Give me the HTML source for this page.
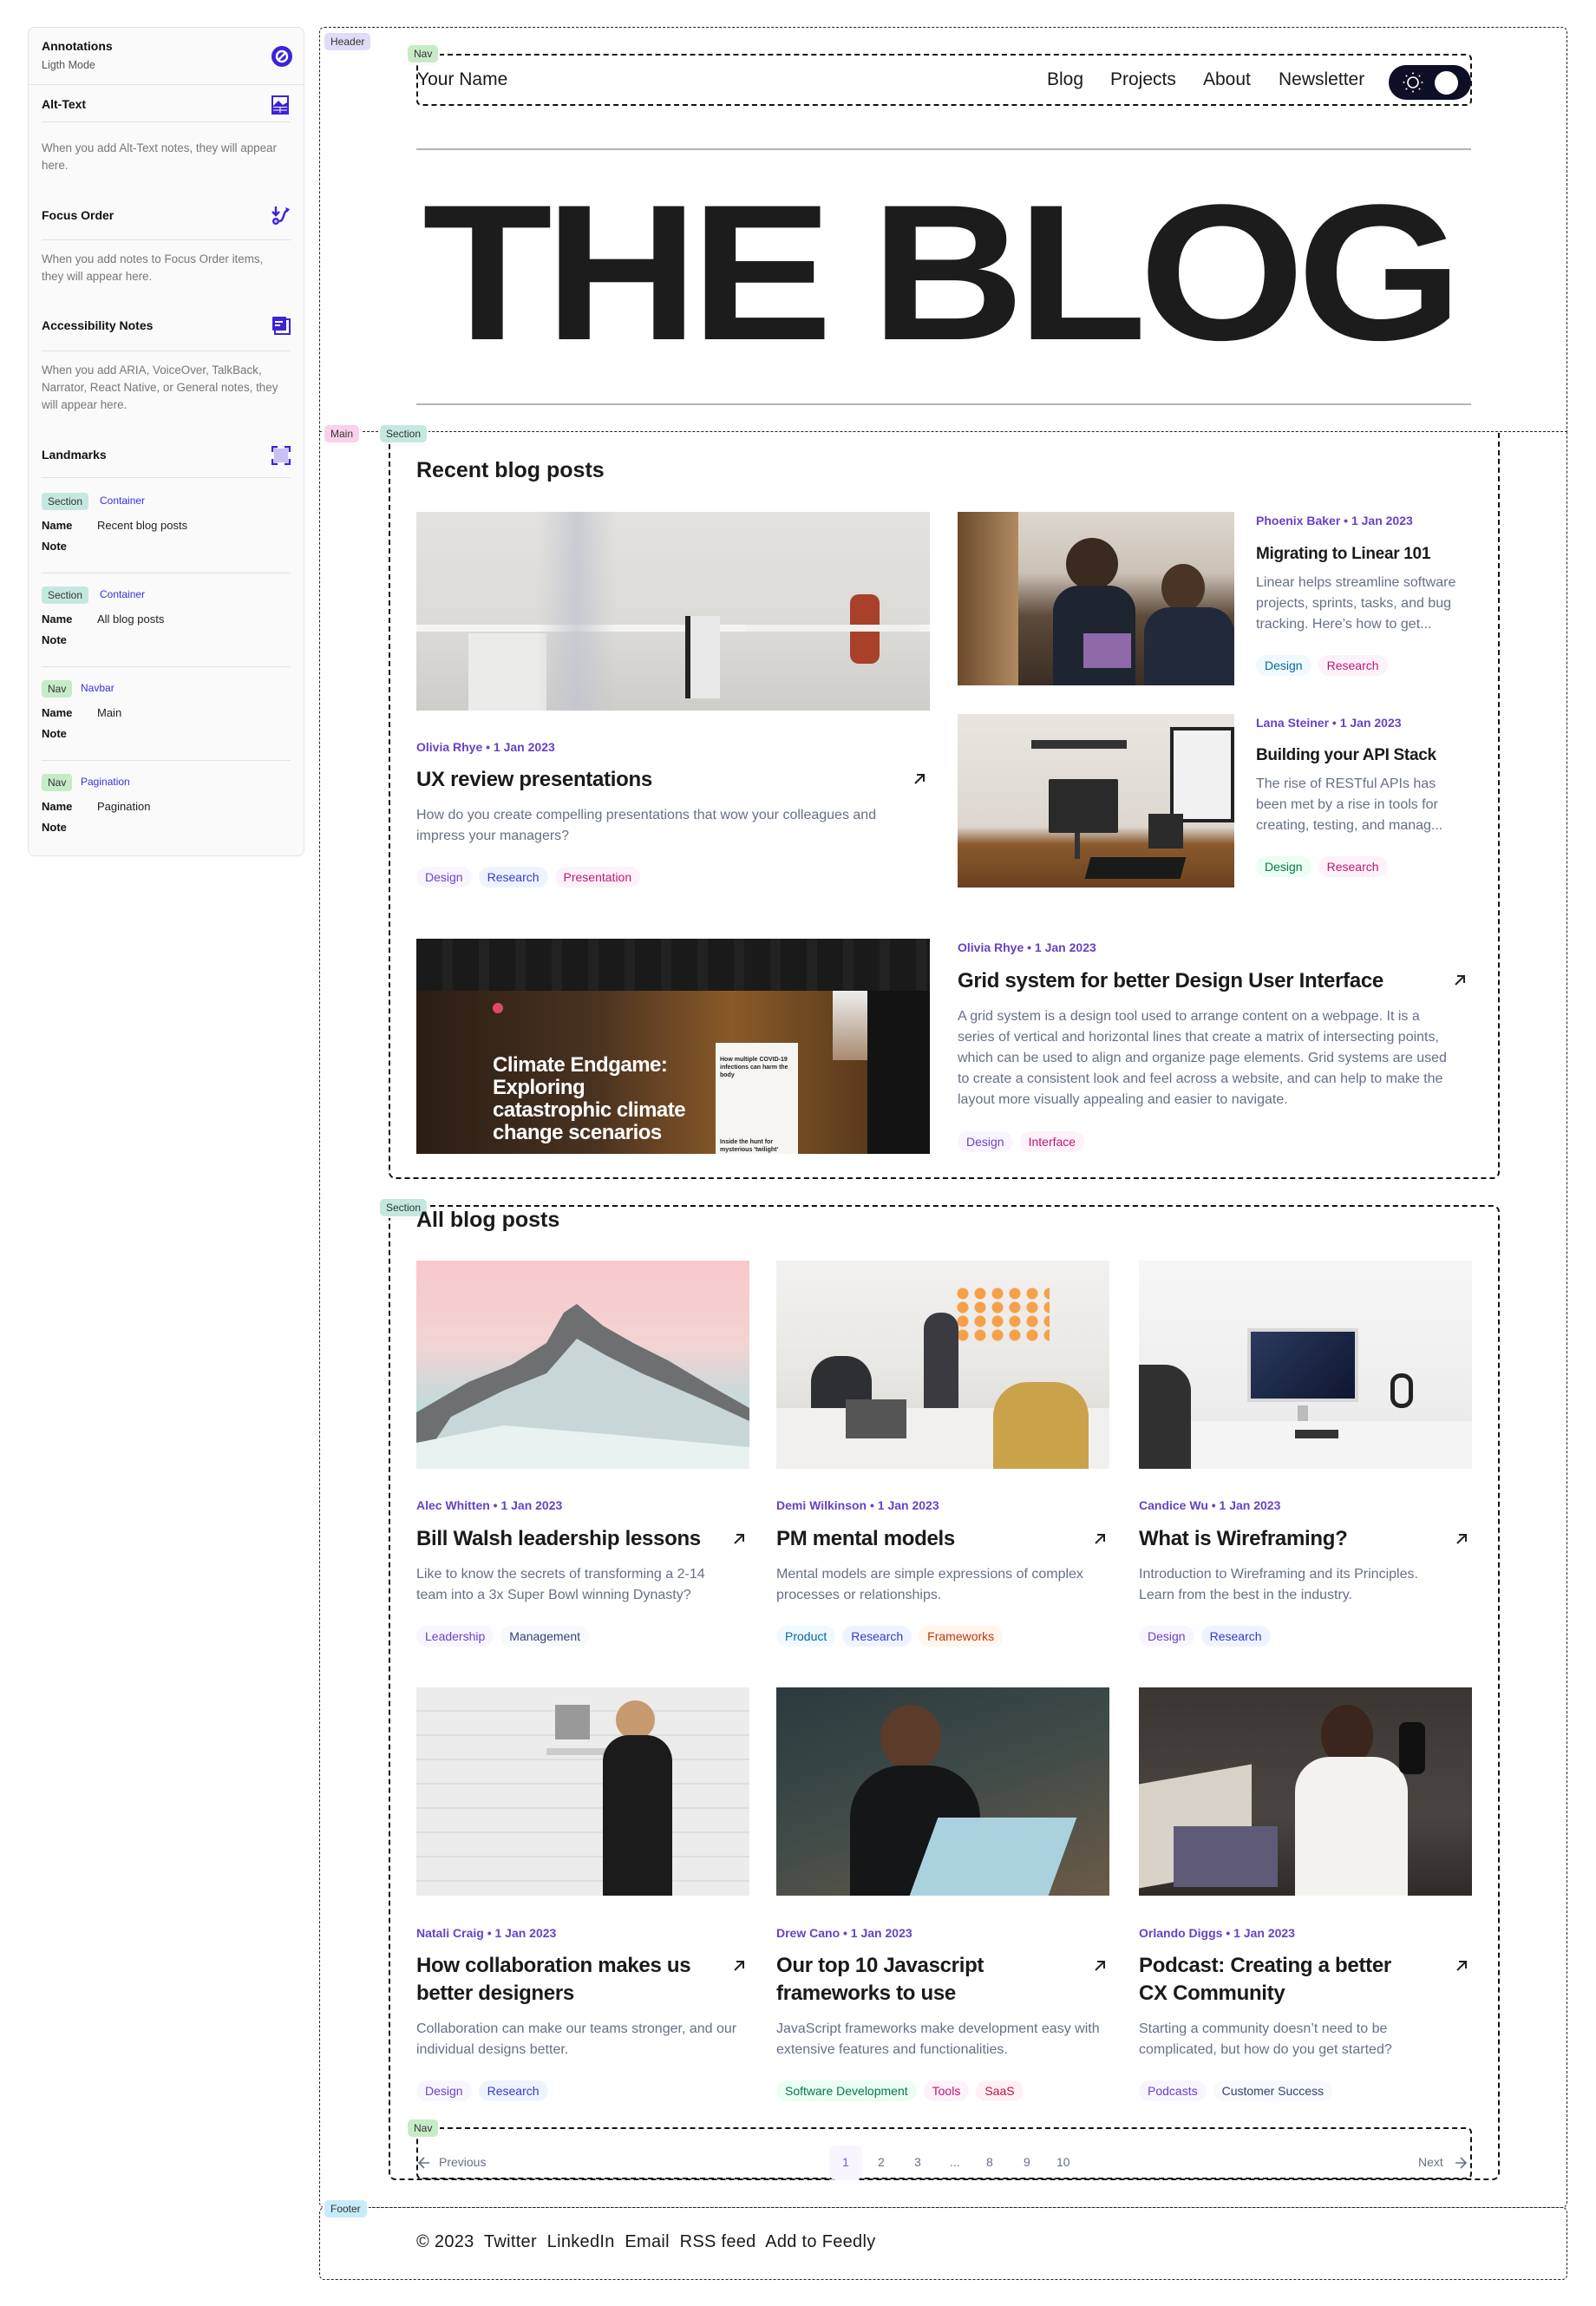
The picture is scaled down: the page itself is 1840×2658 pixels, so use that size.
<!DOCTYPE html>
<html><head><meta charset="utf-8">
<style>
*{margin:0;padding:0;box-sizing:border-box}
body{width:1840px;height:2658px;background:#fff;font-family:"Liberation Sans",Arial,sans-serif;position:relative;overflow:hidden;color:#1a1a1a}
.a{position:absolute}
.lbl{position:absolute;font-size:12px;color:#333;padding:3px 7px;border-radius:5px;line-height:14px;box-shadow:0 0 0 2px #fff,0 1px 3px rgba(0,0,0,.15)}
.side{position:absolute;left:32px;top:31px;width:319px;height:956px;background:#fafafa;border:1px solid #e4e4e4;border-radius:8px}
.sh{position:absolute;left:15px;font-size:14px;font-weight:bold;color:#111}
.st{position:absolute;left:15px;width:288px;font-size:13.4px;line-height:20px;color:#777}
.dv{position:absolute;left:15px;width:287px;height:1px;background:#e2e2e2}
.ic{position:absolute;left:280px}
.tg{position:absolute;left:15px;font-size:12px;padding:3px 7px;border-radius:4px;color:#333;line-height:14px}
.tl{position:absolute;font-size:12px;color:#3b2ee0}
.nm{position:absolute;left:15px;font-size:13px;font-weight:bold;color:#111}
.nv{position:absolute;left:79px;font-size:13px;color:#222}
.meta{position:absolute;font-size:14px;font-weight:bold;color:#6941c6;line-height:20px}
.ttl{position:absolute;font-size:24px;font-weight:bold;color:#1a1a1a;line-height:32px;letter-spacing:-0.3px}
.ds{position:absolute;font-size:16px;color:#667085;line-height:24px}
.tags{position:absolute;display:flex;gap:8px}
.t{font-size:14px;line-height:24px;height:24px;padding:0 10px;border-radius:12px;font-weight:500}
.pu{color:#6941c6;background:#f9f5ff}.in{color:#3538cd;background:#eef4ff}.pk{color:#c11574;background:#fdf2fa}
.gr{color:#363f72;background:#f8f9fc}.bl{color:#026aa2;background:#f0f9ff}.or{color:#c4320a;background:#fff6ed}
.gn{color:#027a48;background:#ecfdf3}.rs{color:#c01048;background:#fff1f3}
.arr{position:absolute;width:16px;height:16px}
.img{position:absolute;overflow:hidden}
</style></head><body>

<!-- Sidebar -->
<div class="side">
  <div class="sh" style="top:13px">Annotations</div>
  <div class="a" style="left:15px;top:36px;font-size:12.5px;color:#555">Ligth Mode</div>
  <svg class="ic" style="top:21px" width="24" height="24" viewBox="0 0 24 24"><circle cx="12" cy="12" r="12" fill="#3b24d6"/><circle cx="12" cy="12" r="6" fill="none" stroke="#fff" stroke-width="2.4"/><line x1="7" y1="17" x2="17" y2="7" stroke="#fff" stroke-width="2.4"/></svg>
  <div class="a" style="left:0;top:65px;width:317px;height:1px;background:#e6e6e6"></div>
  <div class="sh" style="top:80px">Alt-Text</div>
  <svg class="ic" style="top:78px" width="20" height="22" viewBox="0 0 20 22"><rect x="1" y="1" width="18" height="20" fill="none" stroke="#3b24d6" stroke-width="2"/><path d="M2 12 L8 6 L13 11 L18 8 V13 H2Z" fill="#3b24d6"/><rect x="2" y="14" width="16" height="6" fill="#3b24d6"/><line x1="2" y1="17" x2="18" y2="17" stroke="#fff"/><line x1="10" y1="14" x2="10" y2="20" stroke="#fff"/></svg>
  <div class="dv" style="top:108px"></div>
  <div class="st" style="top:129px">When you add Alt-Text notes, they will appear here.</div>
  <div class="sh" style="top:208px">Focus Order</div>
  <svg class="ic" style="top:204px" width="24" height="26" viewBox="0 0 24 26"><path d="M5 2 V12 M1 8 L5 12 L9 8" fill="none" stroke="#3b24d6" stroke-width="2.4"/><circle cx="5" cy="19" r="4" fill="#3b24d6"/><circle cx="5" cy="19" r="1.8" fill="#c9c1f5"/><path d="M9 19 C15 19 13 7 19 6" fill="none" stroke="#3b24d6" stroke-width="2.4"/><path d="M16 3 L21 5 L18 9Z" fill="#3b24d6"/></svg>
  <div class="dv" style="top:244px"></div>
  <div class="st" style="top:257px;width:270px">When you add notes to Focus Order items, they will appear here.</div>
  <div class="sh" style="top:335px">Accessibility Notes</div>
  <svg class="ic" style="top:332px" width="22" height="22" viewBox="0 0 22 22"><rect x="4" y="4" width="17" height="17" fill="none" stroke="#3b24d6" stroke-width="2"/><rect x="1" y="1" width="16" height="16" rx="1" fill="#3b24d6"/><rect x="4" y="6" width="9" height="2" fill="#fff"/><rect x="4" y="10" width="6" height="2" fill="#fff"/></svg>
  <div class="dv" style="top:372px"></div>
  <div class="st" style="top:385px">When you add ARIA, VoiceOver, TalkBack, Narrator, React Native, or General notes, they will appear here.</div>
  <div class="sh" style="top:484px">Landmarks</div>
  <svg class="ic" style="top:482px" width="22" height="22" viewBox="0 0 22 22"><rect x="3" y="3" width="16" height="16" fill="#c9c1f5"/><path d="M1 7V1H7 M15 1H21V7 M21 15V21H15 M7 21H1V15" fill="none" stroke="#3b24d6" stroke-width="2.4"/></svg>
  <div class="dv" style="top:518px"></div>

  <div class="tg" style="top:536px;background:#c4e8e0">Section</div><div class="tl" style="left:82px;top:538px">Container</div>
  <div class="nm" style="top:566px">Name</div><div class="nv" style="top:566px">Recent blog posts</div>
  <div class="nm" style="top:590px">Note</div>
  <div class="dv" style="top:628px"></div>
  <div class="tg" style="top:644px;background:#c4e8e0">Section</div><div class="tl" style="left:82px;top:646px">Container</div>
  <div class="nm" style="top:674px">Name</div><div class="nv" style="top:674px">All blog posts</div>
  <div class="nm" style="top:698px">Note</div>
  <div class="dv" style="top:736px"></div>
  <div class="tg" style="top:752px;background:#c8eac8">Nav</div><div class="tl" style="left:60px;top:754px">Navbar</div>
  <div class="nm" style="top:782px">Name</div><div class="nv" style="top:782px">Main</div>
  <div class="nm" style="top:806px">Note</div>
  <div class="dv" style="top:844px"></div>
  <div class="tg" style="top:860px;background:#c8eac8">Nav</div><div class="tl" style="left:60px;top:862px">Pagination</div>
  <div class="nm" style="top:890px">Name</div><div class="nv" style="top:890px">Pagination</div>
  <div class="nm" style="top:914px">Note</div>
</div>

<!-- Header -->
<div class="a" style="left:368px;top:31px;width:1439px;height:467px;border:1px dashed #222;border-bottom:none;border-radius:6px 6px 0 0"></div>
<div class="lbl" style="left:374px;top:38px;background:#e0dcf7">Header</div>
<div class="a" style="left:480px;top:62px;width:1217px;height:60px;border:2px dashed #111;border-radius:6px"></div>
<div class="lbl" style="left:470px;top:52px;background:#c8eac8">Nav</div>
<div class="a" style="left:481px;top:80px;font-size:21px;color:#1a1a1a">Your Name</div>
<div class="a" style="left:1207px;top:80px;font-size:21px;color:#1a1a1a">Blog</div>
<div class="a" style="left:1280px;top:80px;font-size:21px;color:#1a1a1a">Projects</div>
<div class="a" style="left:1387px;top:80px;font-size:21px;color:#1a1a1a">About</div>
<div class="a" style="left:1474px;top:80px;font-size:21px;color:#1a1a1a">Newsletter</div>
<div class="a" style="left:1601px;top:75px;width:95px;height:40px;border-radius:20px;background:#0d0f26"></div>
<div class="a" style="left:1654px;top:82px;width:27px;height:27px;border-radius:50%;background:#fff"></div>
<svg class="a" style="left:1616px;top:82px" width="26" height="26" viewBox="0 0 26 26"><circle cx="13" cy="13" r="6" fill="none" stroke="#fff" stroke-width="1.6"/><g fill="#fff"><circle cx="13" cy="2.5" r="1"/><circle cx="13" cy="23.5" r="1"/><circle cx="2.5" cy="13" r="1"/><circle cx="23.5" cy="13" r="1"/><circle cx="5.5" cy="5.5" r="1"/><circle cx="20.5" cy="20.5" r="1"/><circle cx="5.5" cy="20.5" r="1"/><circle cx="20.5" cy="5.5" r="1"/></g></svg>
<div class="a" style="left:480px;top:171px;width:1216px;height:2px;background:#b3b3b3"></div>
<div class="a" style="left:487px;top:203px;font-size:223px;line-height:223px;font-weight:bold;color:#1c1c1c;letter-spacing:-8px;word-spacing:-6px;white-space:nowrap;transform:scaleX(1.1);transform-origin:0 0">THE BLOG</div>
<div class="a" style="left:480px;top:465px;width:1216px;height:2px;background:#b3b3b3"></div>

<!-- Main -->
<div class="a" style="left:368px;top:497px;width:1439px;height:2048px;border:1px dashed #222;border-radius:0 0 6px 6px"></div>
<div class="lbl" style="left:374px;top:490px;background:#fbd0ea">Main</div>
<div class="a" style="left:448px;top:497px;width:1281px;height:862px;border:2px dashed #111;border-top:none;border-radius:0 0 8px 8px"></div>
<div class="lbl" style="left:438px;top:490px;background:#c4e8e0">Section</div>
<div class="a" style="left:480px;top:528px;font-size:25px;font-weight:bold;color:#1a1a1a">Recent blog posts</div>

<!-- Featured big -->
<div class="img" style="left:480px;top:590px;width:592px;height:229px;background:linear-gradient(180deg,#e4e2df 0%,#dcdad6 60%,#cfcdc9 100%)">
  <div class="a" style="left:0;top:130px;width:592px;height:8px;background:#f4f4f2"></div>
  <div class="a" style="left:60px;top:140px;width:90px;height:89px;background:#ebebea"></div>
  <div class="a" style="left:140px;top:0;width:90px;height:229px;background:linear-gradient(90deg,rgba(200,200,205,0),rgba(190,195,205,.7),rgba(200,200,205,0))"></div>
  <div class="a" style="left:310px;top:120px;width:40px;height:95px;background:#e8e8e8;border-left:6px solid #222"></div>
  <div class="a" style="left:500px;top:95px;width:34px;height:80px;background:#a9412a;border-radius:10px"></div>
  <div class="a" style="left:380px;top:130px;width:200px;height:8px;background:#f0f0ee"></div>
</div>
<div class="meta" style="left:480px;top:851px">Olivia Rhye • 1 Jan 2023</div>
<div class="ttl" style="left:480px;top:883px">UX review presentations</div>
<svg class="arr" style="left:1052px;top:890px" viewBox="0 0 16 16"><path d="M3 13 L13 3 M5 3 H13 V11" fill="none" stroke="#222" stroke-width="2"/></svg>
<div class="ds" style="left:480px;top:928px;width:590px">How do you create compelling presentations that wow your colleagues and impress your managers?</div>
<div class="tags" style="left:480px;top:999px"><span class="t pu">Design</span><span class="t in">Research</span><span class="t pk">Presentation</span></div>

<!-- Right 1 -->
<div class="img" style="left:1104px;top:590px;width:319px;height:200px;background:linear-gradient(180deg,#ddd7cf 0%,#cbc2b5 35%,#5d4a3a 60%,#3a2e24 100%)">
  <div class="a" style="left:0;top:0;width:70px;height:200px;background:linear-gradient(90deg,#6b4a2c,#b08a60)"></div>
  <div class="a" style="left:125px;top:30px;width:60px;height:60px;border-radius:50%;background:#3a2a20"></div>
  <div class="a" style="left:110px;top:85px;width:95px;height:115px;border-radius:30px 30px 0 0;background:#1e2430"></div>
  <div class="a" style="left:235px;top:60px;width:50px;height:55px;border-radius:50%;background:#4a3426"></div>
  <div class="a" style="left:215px;top:110px;width:104px;height:90px;border-radius:30px 30px 0 0;background:#22293a"></div>
  <div class="a" style="left:145px;top:140px;width:55px;height:40px;background:#8e6aa8"></div>
</div>
<div class="meta" style="left:1448px;top:590px">Phoenix Baker • 1 Jan 2023</div>
<div class="ttl" style="left:1448px;top:623px;font-size:19px">Migrating to Linear 101</div>
<div class="ds" style="left:1448px;top:660px;width:252px;font-size:16px">Linear helps streamline software projects, sprints, tasks, and bug tracking. Here’s how to get...</div>
<div class="tags" style="left:1448px;top:755px"><span class="t bl">Design</span><span class="t pk">Research</span></div>

<!-- Right 2 -->
<div class="img" style="left:1104px;top:823px;width:319px;height:200px;background:linear-gradient(180deg,#e9e5e0 0%,#ddd7d0 65%,#8a5a2e 75%,#6b4220 100%)">
  <div class="a" style="left:85px;top:30px;width:110px;height:10px;background:#333"></div>
  <div class="a" style="left:245px;top:15px;width:74px;height:110px;border:4px solid #222;background:#f1f1f1"></div>
  <div class="a" style="left:105px;top:75px;width:80px;height:62px;background:#2a2a2a;border-radius:2px"></div>
  <div class="a" style="left:135px;top:137px;width:6px;height:30px;background:#333"></div>
  <div class="a" style="left:150px;top:165px;width:110px;height:25px;background:#1a1a1a;transform:skewX(-15deg)"></div>
  <div class="a" style="left:220px;top:115px;width:40px;height:40px;background:#2b2b2b"></div>
</div>
<div class="meta" style="left:1448px;top:823px">Lana Steiner • 1 Jan 2023</div>
<div class="ttl" style="left:1448px;top:855px;font-size:19px">Building your API Stack</div>
<div class="ds" style="left:1448px;top:892px;width:225px;font-size:16px">The rise of RESTful APIs has been met by a rise in tools for creating, testing, and manag...</div>
<div class="tags" style="left:1448px;top:987px"><span class="t gn">Design</span><span class="t pk">Research</span></div>

<!-- Climate -->
<div class="img" style="left:480px;top:1082px;width:592px;height:248px;background:#141313">
  <div class="a" style="left:0;top:0;width:592px;height:60px;background:repeating-linear-gradient(90deg,#1a1a1a 0 30px,#222 30px 42px)"></div>
  <div class="a" style="left:0;top:60px;width:520px;height:188px;background:linear-gradient(90deg,#2a1d14 0%,#4a3220 40%,#8a5a28 70%,#5a3a1c 100%)"></div>
  <div class="a" style="left:88px;top:74px;width:12px;height:12px;border-radius:50%;background:#e04a6a"></div>
  <div class="a" style="left:88px;top:133px;font-size:24px;line-height:26px;font-weight:bold;color:#fff;letter-spacing:-0.5px;width:240px">Climate Endgame: Exploring catastrophic climate change scenarios</div>
  <div class="a" style="left:345px;top:120px;width:95px;height:128px;background:#f7f5f2"></div>
  <div class="a" style="left:350px;top:135px;font-size:7px;line-height:9px;font-weight:bold;color:#222;width:80px">How multiple COVID-19 infections can harm the body</div>
  <div class="a" style="left:350px;top:230px;font-size:7px;line-height:9px;font-weight:bold;color:#222;width:80px">Inside the hunt for mysterious 'twilight'</div>
  <div class="a" style="left:480px;top:60px;width:40px;height:80px;background:linear-gradient(180deg,#eee,#a88a70)"></div>
</div>
<div class="meta" style="left:1104px;top:1082px">Olivia Rhye • 1 Jan 2023</div>
<div class="ttl" style="left:1104px;top:1115px">Grid system for better Design User Interface</div>
<svg class="arr" style="left:1675px;top:1122px" viewBox="0 0 16 16"><path d="M3 13 L13 3 M5 3 H13 V11" fill="none" stroke="#222" stroke-width="2"/></svg>
<div class="ds" style="left:1104px;top:1160px;width:565px;font-size:16px">A grid system is a design tool used to arrange content on a webpage. It is a series of vertical and horizontal lines that create a matrix of intersecting points, which can be used to align and organize page elements. Grid systems are used to create a consistent look and feel across a website, and can help to make the layout more visually appealing and easier to navigate.</div>
<div class="tags" style="left:1104px;top:1304px"><span class="t pu">Design</span><span class="t pk">Interface</span></div>

<!-- Section 2 -->
<div class="a" style="left:448px;top:1389px;width:1281px;height:1124px;border:2px dashed #111;border-radius:8px"></div>
<div class="lbl" style="left:438px;top:1382px;background:#c4e8e0">Section</div>
<div class="a" style="left:480px;top:1392px;font-size:25px;font-weight:bold;color:#1a1a1a">All blog posts</div>

<!-- Row 1 images -->
<div class="img" style="left:480px;top:1453px;width:384px;height:240px;background:linear-gradient(180deg,#f8c9cc 0%,#f3d3d3 40%,#b9dcdc 75%,#9fd0d4 100%)">
  <svg class="a" style="left:0;top:0" width="384" height="240" viewBox="0 0 384 240"><path d="M0 175 L60 140 L110 120 L150 95 L170 60 L185 50 L215 75 L250 95 L290 115 L340 145 L384 170 V240 H0Z" fill="#6e6f70"/><path d="M40 180 L100 150 L150 130 L185 90 L220 110 L260 130 L330 160 L384 185 V240 H0Z" fill="#c8d6d8"/><path d="M0 210 L100 190 L220 200 L384 215 V240 H0Z" fill="#e9f1f1"/></svg>
</div>
<div class="img" style="left:895px;top:1453px;width:384px;height:240px;background:linear-gradient(180deg,#f2f1ef 0%,#e9e8e5 50%,#d8d5d0 100%)">
  <div class="a" style="left:205px;top:30px;width:110px;height:65px;background:radial-gradient(circle,#f6a04a 0 6px,transparent 7px) 0 0/20px 16px"></div>
  <div class="a" style="left:40px;top:110px;width:70px;height:90px;border-radius:30px 30px 0 0;background:#2d2f33"></div>
  <div class="a" style="left:170px;top:60px;width:40px;height:120px;border-radius:18px 18px 0 0;background:#3a3a40"></div>
  <div class="a" style="left:0;top:170px;width:384px;height:70px;background:#f1f0ee"></div>
  <div class="a" style="left:250px;top:140px;width:110px;height:100px;border-radius:40px 40px 0 0;background:#c9a24a"></div>
  <div class="a" style="left:80px;top:160px;width:70px;height:45px;background:#555"></div>
</div>
<div class="img" style="left:1313px;top:1453px;width:384px;height:240px;background:linear-gradient(180deg,#f6f6f6 0%,#ededed 70%,#e2e2e2 100%)">
  <div class="a" style="left:125px;top:78px;width:128px;height:85px;background:linear-gradient(135deg,#2b3a5e,#0f1630);border:4px solid #d8d8d8"></div>
  <div class="a" style="left:183px;top:167px;width:12px;height:22px;background:#bbb"></div>
  <div class="a" style="left:0;top:185px;width:384px;height:55px;background:#f4f4f4"></div>
  <div class="a" style="left:290px;top:130px;width:26px;height:40px;border:5px solid #222;border-radius:12px"></div>
  <div class="a" style="left:0;top:120px;width:60px;height:120px;background:#303030;border-radius:0 30px 0 0"></div>
  <div class="a" style="left:180px;top:195px;width:50px;height:10px;background:#333"></div>
</div>
<div class="meta" style="left:480px;top:1725px">Alec Whitten • 1 Jan 2023</div>
<div class="meta" style="left:895px;top:1725px">Demi Wilkinson • 1 Jan 2023</div>
<div class="meta" style="left:1313px;top:1725px">Candice Wu • 1 Jan 2023</div>
<div class="ttl" style="left:480px;top:1758px">Bill Walsh leadership lessons</div>
<div class="ttl" style="left:895px;top:1758px">PM mental models</div>
<div class="ttl" style="left:1313px;top:1758px">What is Wireframing?</div>
<svg class="arr" style="left:844px;top:1766px" viewBox="0 0 16 16"><path d="M3 13 L13 3 M5 3 H13 V11" fill="none" stroke="#222" stroke-width="2"/></svg>
<svg class="arr" style="left:1260px;top:1766px" viewBox="0 0 16 16"><path d="M3 13 L13 3 M5 3 H13 V11" fill="none" stroke="#222" stroke-width="2"/></svg>
<svg class="arr" style="left:1677px;top:1766px" viewBox="0 0 16 16"><path d="M3 13 L13 3 M5 3 H13 V11" fill="none" stroke="#222" stroke-width="2"/></svg>
<div class="ds" style="left:480px;top:1803px;width:370px">Like to know the secrets of transforming a 2-14 team into a 3x Super Bowl winning Dynasty?</div>
<div class="ds" style="left:895px;top:1803px;width:380px">Mental models are simple expressions of complex processes or relationships.</div>
<div class="ds" style="left:1313px;top:1803px;width:360px">Introduction to Wireframing and its Principles. Learn from the best in the industry.</div>
<div class="tags" style="left:480px;top:1874px"><span class="t pu">Leadership</span><span class="t gr">Management</span></div>
<div class="tags" style="left:895px;top:1874px"><span class="t bl">Product</span><span class="t in">Research</span><span class="t or">Frameworks</span></div>
<div class="tags" style="left:1313px;top:1874px"><span class="t pu">Design</span><span class="t in">Research</span></div>

<!-- Row 2 images -->
<div class="img" style="left:480px;top:1945px;width:384px;height:240px;background:repeating-linear-gradient(180deg,#ececec 0 26px,#dedede 26px 28px),#eee">
  <div class="a" style="left:150px;top:70px;width:80px;height:8px;background:#ccc"></div>
  <div class="a" style="left:230px;top:15px;width:45px;height:45px;border-radius:50%;background:#c89a70"></div>
  <div class="a" style="left:215px;top:55px;width:80px;height:185px;border-radius:30px 30px 0 0;background:#1b1b1b"></div>
  <div class="a" style="left:160px;top:20px;width:40px;height:40px;background:#999"></div>
</div>
<div class="img" style="left:895px;top:1945px;width:384px;height:240px;background:linear-gradient(160deg,#2b3a3e 0%,#3d4a48 45%,#6b5a48 100%)">
  <div class="a" style="left:120px;top:20px;width:70px;height:75px;border-radius:50%;background:#5b3b2a"></div>
  <div class="a" style="left:85px;top:90px;width:150px;height:150px;border-radius:60px 60px 0 0;background:#151617"></div>
  <div class="a" style="left:170px;top:150px;width:160px;height:90px;background:#a9d2de;transform:skewX(-20deg)"></div>
</div>
<div class="img" style="left:1313px;top:1945px;width:384px;height:240px;background:linear-gradient(180deg,#3b3632 0%,#4a4540 60%,#2f2b28 100%)">
  <div class="a" style="left:0;top:100px;width:130px;height:120px;background:#d8d1c8;transform:skewY(-10deg)"></div>
  <div class="a" style="left:40px;top:160px;width:120px;height:70px;background:#5e5a78"></div>
  <div class="a" style="left:210px;top:20px;width:60px;height:70px;border-radius:50%;background:#3a261c"></div>
  <div class="a" style="left:180px;top:80px;width:130px;height:160px;border-radius:40px 40px 0 0;background:#f3f2ef"></div>
  <div class="a" style="left:300px;top:40px;width:30px;height:60px;background:#111;border-radius:8px"></div>
</div>
<div class="meta" style="left:480px;top:2218px">Natali Craig • 1 Jan 2023</div>
<div class="meta" style="left:895px;top:2218px">Drew Cano • 1 Jan 2023</div>
<div class="meta" style="left:1313px;top:2218px">Orlando Diggs • 1 Jan 2023</div>
<div class="ttl" style="left:480px;top:2250px;width:330px">How collaboration makes us better designers</div>
<div class="ttl" style="left:895px;top:2250px;width:330px">Our top 10 Javascript frameworks to use</div>
<div class="ttl" style="left:1313px;top:2250px;width:320px">Podcast: Creating a better CX Community</div>
<svg class="arr" style="left:844px;top:2258px" viewBox="0 0 16 16"><path d="M3 13 L13 3 M5 3 H13 V11" fill="none" stroke="#222" stroke-width="2"/></svg>
<svg class="arr" style="left:1260px;top:2258px" viewBox="0 0 16 16"><path d="M3 13 L13 3 M5 3 H13 V11" fill="none" stroke="#222" stroke-width="2"/></svg>
<svg class="arr" style="left:1677px;top:2258px" viewBox="0 0 16 16"><path d="M3 13 L13 3 M5 3 H13 V11" fill="none" stroke="#222" stroke-width="2"/></svg>
<div class="ds" style="left:480px;top:2327px;width:370px">Collaboration can make our teams stronger, and our individual designs better.</div>
<div class="ds" style="left:895px;top:2327px;width:380px">JavaScript frameworks make development easy with extensive features and functionalities.</div>
<div class="ds" style="left:1313px;top:2327px;width:340px">Starting a community doesn’t need to be complicated, but how do you get started?</div>
<div class="tags" style="left:480px;top:2398px"><span class="t pu">Design</span><span class="t in">Research</span></div>
<div class="tags" style="left:895px;top:2398px"><span class="t gn">Software Development</span><span class="t pk">Tools</span><span class="t rs">SaaS</span></div>
<div class="tags" style="left:1313px;top:2398px"><span class="t pu">Podcasts</span><span class="t gr">Customer Success</span></div>

<!-- Pagination -->
<div class="a" style="left:480px;top:2452px;width:1217px;height:60px;border:2px dashed #111;border-radius:6px"></div>
<div class="lbl" style="left:470px;top:2443px;background:#c8eac8">Nav</div>
<svg class="a" style="left:481px;top:2484px" width="16" height="18" viewBox="0 0 16 18"><path d="M14 9 H2 M8 3 L2 9 L8 15" fill="none" stroke="#667085" stroke-width="1.6"/></svg>
<div class="a" style="left:506px;top:2484px;font-size:14px;color:#667085">Previous</div>
<div class="a" style="left:956px;top:2473px;width:38px;height:40px;border-radius:8px;background:#f9f5ff"></div>
<div class="a" style="left:971px;top:2484px;font-size:14px;color:#7f56d9">1</div>
<div class="a" style="left:1012px;top:2484px;font-size:14px;color:#667085">2</div>
<div class="a" style="left:1054px;top:2484px;font-size:14px;color:#667085">3</div>
<div class="a" style="left:1095px;top:2484px;font-size:14px;color:#667085">...</div>
<div class="a" style="left:1137px;top:2484px;font-size:14px;color:#667085">8</div>
<div class="a" style="left:1180px;top:2484px;font-size:14px;color:#667085">9</div>
<div class="a" style="left:1218px;top:2484px;font-size:14px;color:#667085">10</div>
<div class="a" style="left:1635px;top:2484px;font-size:14px;color:#667085">Next</div>
<svg class="a" style="left:1676px;top:2484px" width="16" height="18" viewBox="0 0 16 18"><path d="M2 9 H14 M8 3 L14 9 L8 15" fill="none" stroke="#667085" stroke-width="1.6"/></svg>

<!-- Footer -->
<div class="a" style="left:368px;top:2544px;width:1439px;height:84px;border:1px dashed #222;border-radius:6px"></div>
<div class="lbl" style="left:374px;top:2536px;background:#c6ecfa">Footer</div>
<div class="a" style="left:480px;top:2573px;font-size:20px;color:#1a1a1a;white-space:pre;letter-spacing:0.3px">© 2023  Twitter  LinkedIn  Email  RSS feed  Add to Feedly</div>
</body></html>
